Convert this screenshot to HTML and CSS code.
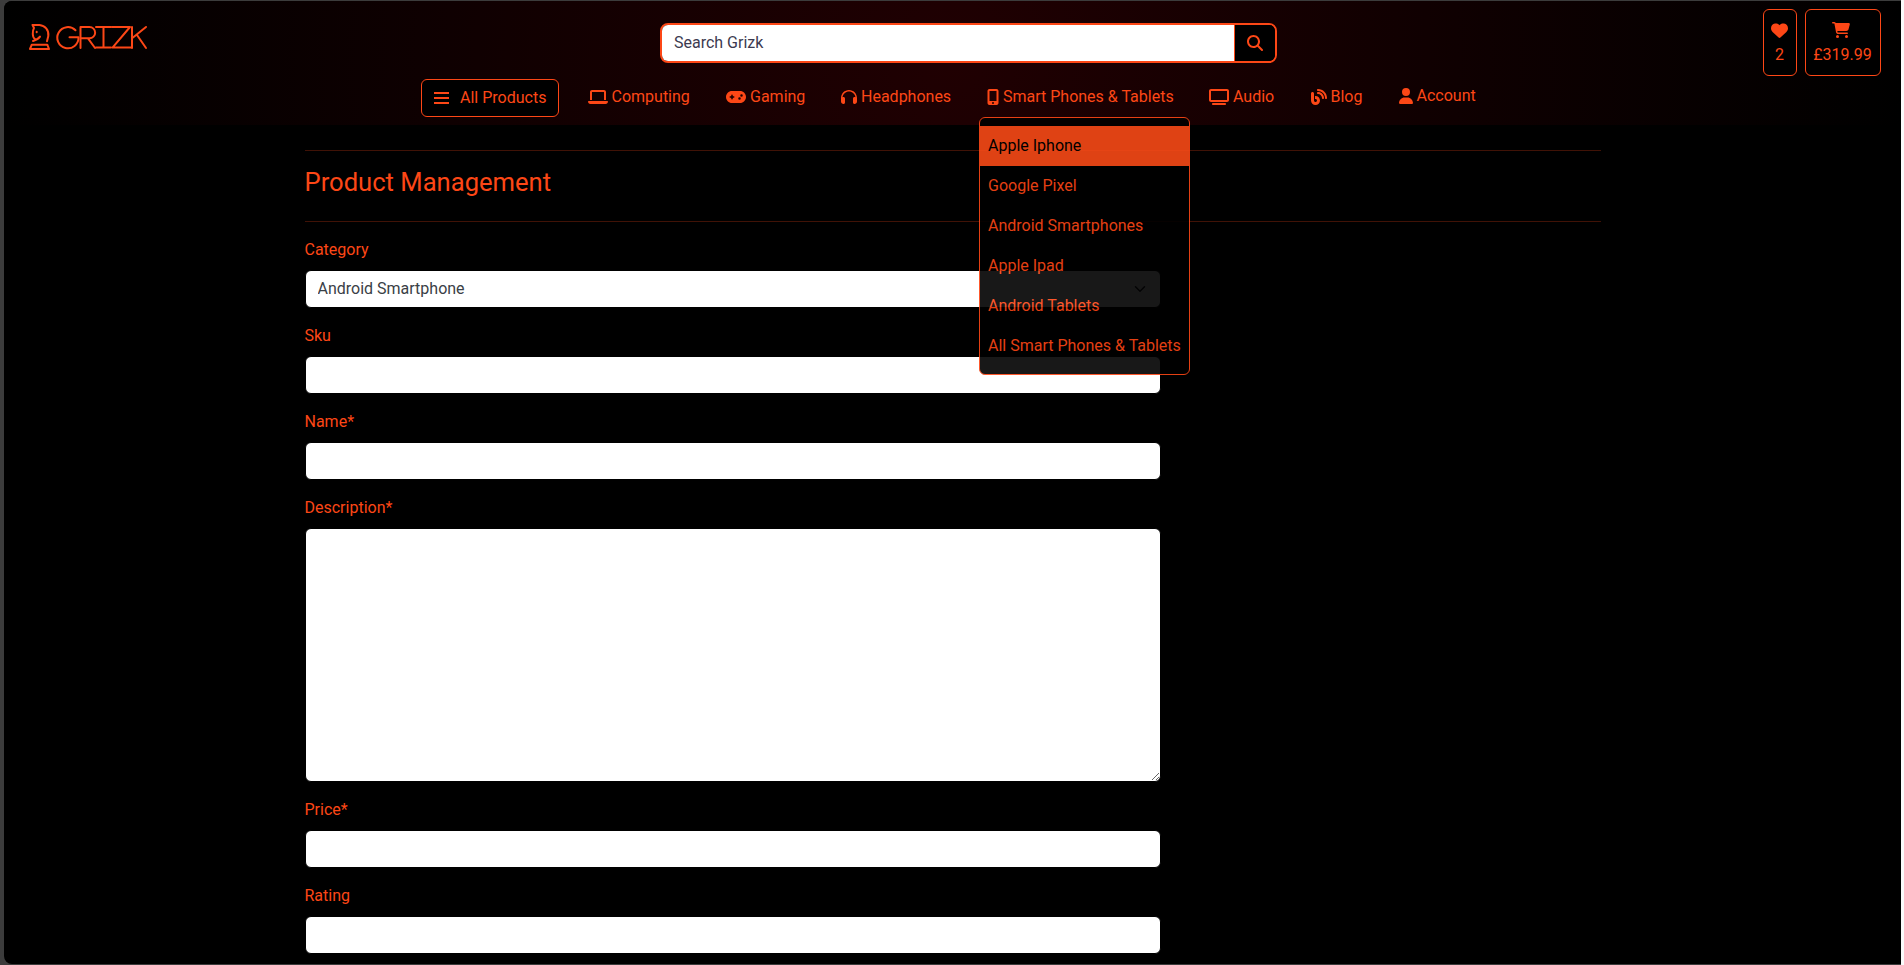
FILE: index.html
```html
<!DOCTYPE html>
<html lang="en">
<head>
<meta charset="utf-8">
<title>Grizk - Product Management</title>
<link rel="stylesheet" href="styles.css">
</head>
<body>
<div class="page">
  <header class="header">
    <div class="topbar">
      <a class="logo" aria-label="Grizk">
        <svg width="120" height="30" viewBox="28 22 120 30" fill="none" stroke="currentColor" stroke-width="2" stroke-linejoin="round" stroke-linecap="round">
          <path d="M33 41C35.500 40.200 38.500 38.800 40 36.600M34.800 38.800C32.300 37.500 32.200 31 34 28L32.500 25H39.500C45 25.500 49 30 48.300 36L47 41.200"/>
          <path d="M36.700 31.700V32.200"/>
          <path d="M31.800 44.700H47.300L49 49H30Z"/>
          <path d="M75.500 30.300A10.600 10.600 0 1 0 78.500 37.300H69.500"/>
          <path d="M80.500 48V27H89.500A5.600 5.600 0 0 1 89.500 38.300H80.500M88 38.300L95 48"/>
          <path d="M96 27H111M96 47.600H111M103.500 27V47.600"/>
          <path d="M112 27H130L112.500 47.600H131"/>
          <path d="M132 27V48M146 27L133 37.500M137 35L146 48"/>
        </svg>
      </a>
      <form class="search">
        <input class="search-input" type="text" placeholder="Search Grizk">
        <button class="search-button" type="button" aria-label="Search"><svg class="icon" width="16" height="16" viewBox="0 0 512 512"><path d="M416 208c0 45.900-14.900 88.300-40 122.700L502.600 457.400c12.500 12.500 12.500 32.800 0 45.300s-32.800 12.500-45.300 0L330.700 376c-34.400 25.200-76.800 40-122.700 40C93.100 416 0 322.900 0 208S93.100 0 208 0S416 93.100 416 208zM208 352a144 144 0 1 0 0-288 144 144 0 1 0 0 288z"/></svg></button>
      </form>
      <div class="baskets">
        <a class="basket wishlist"><svg class="icon" width="17" height="17" viewBox="0 0 512 512"><path d="M47.600 300.400L228.300 469.100c7.500 7 17.400 10.900 27.700 10.900s20.200-3.900 27.700-10.900L464.400 300.400c30.400-28.300 47.600-68 47.600-109.500v-5.800c0-69.900-50.500-129.500-119.400-141C347 36.500 300.600 51.400 268 84L256 96 244 84c-32.600-32.600-79-47.500-124.600-39.900C50.500 55.600 0 115.200 0 185.100v5.800c0 41.500 17.200 81.200 47.600 109.500z"/></svg><span>2</span></a>
        <a class="basket cart"><svg class="icon" width="18" height="16" viewBox="0 0 576 512"><path d="M0 24C0 10.700 10.700 0 24 0H69.500c22 0 41.500 12.800 50.600 32h411c26.300 0 45.500 25 38.600 50.400l-41 152.300c-8.500 31.400-37 53.300-69.500 53.300H170.700l5.400 28.500c2.200 11.300 12.100 19.500 23.600 19.500H488c13.300 0 24 10.700 24 24s-10.700 24-24 24H199.700c-34.600 0-64.300-24.600-70.700-58.500L77.400 54.500c-.7-3.800-4-6.500-7.900-6.500H24C10.700 48 0 37.300 0 24zM128 464a48 48 0 1 1 96 0 48 48 0 1 1-96 0zm336-48a48 48 0 1 1 0 96 48 48 0 1 1 0-96z"/></svg><span>£319.99</span></a>
      </div>
    </div>
    <nav class="nav">
      <button class="all-products" type="button"><svg class="icon" width="15" height="14" viewBox="0 0 15 14"><path d="M0 1h15v2H0zM0 6h15v2H0zM0 11h15v2H0z"/></svg>All Products</button>
      <a class="nav-link computing"><svg class="icon" width="20" height="16" viewBox="0 0 640 512"><path d="M128 32C92.700 32 64 60.700 64 96V352h64V96H512V352h64V96c0-35.300-28.700-64-64-64H128zM19.200 384C8.600 384 0 392.600 0 403.200C0 445.600 34.400 480 76.800 480H563.200c42.400 0 76.800-34.400 76.800-76.800c0-10.600-8.600-19.200-19.200-19.200H19.200z"/></svg>Computing</a>
      <a class="nav-link gaming"><svg class="icon" width="20" height="16" viewBox="0 0 640 512"><path d="M192 64C86 64 0 150 0 256S86 448 192 448H448c106 0 192-86 192-192s-86-192-192-192H192zM496 168a40 40 0 1 1 0 80 40 40 0 1 1 0-80zM392 304a40 40 0 1 1 80 0 40 40 0 1 1-80 0zM168 200c0-13.300 10.700-24 24-24s24 10.700 24 24v32h32c13.300 0 24 10.700 24 24s-10.700 24-24 24H216v32c0 13.300-10.700 24-24 24s-24-10.700-24-24V280H136c-13.300 0-24-10.700-24-24s10.700-24 24-24h32V200z"/></svg>Gaming</a>
      <a class="nav-link headphones"><svg class="icon" width="16" height="16" viewBox="0 0 512 512"><path d="M256 80C149.900 80 62.400 159.400 49.600 262c9.400-3.800 19.600-6 30.400-6c26.500 0 48 21.500 48 48V432c0 26.500-21.500 48-48 48c-44.200 0-80-35.800-80-80V288C0 146.600 114.600 32 256 32s256 114.600 256 256V400c0 44.200-35.800 80-80 80c-26.500 0-48-21.500-48-48V304c0-26.500 21.500-48 48-48c10.800 0 21 2.100 30.400 6C449.600 159.400 362.100 80 256 80z"/></svg>Headphones</a>
      <div class="nav-item">
        <a class="nav-link"><svg class="icon" width="12" height="16" viewBox="0 0 384 512"><path d="M16 64C16 28.700 44.700 0 80 0H304c35.300 0 64 28.700 64 64V448c0 35.300-28.700 64-64 64H80c-35.300 0-64-28.700-64-64V64zM224 448a32 32 0 1 0-64 0 32 32 0 1 0 64 0zM304 64H80V384H304V64z"/></svg>Smart Phones &amp; Tablets</a>
        <div class="menu">
          <a class="menu-item active">Apple Iphone</a>
          <a class="menu-item">Google Pixel</a>
          <a class="menu-item">Android Smartphones</a>
          <a class="menu-item">Apple Ipad</a>
          <a class="menu-item">Android Tablets</a>
          <a class="menu-item">All Smart Phones &amp; Tablets</a>
        </div>
      </div>
      <a class="nav-link audio"><svg class="icon" width="20" height="16" viewBox="0 0 640 512"><path d="M64 64V352H576V64H64zM0 64C0 28.700 28.700 0 64 0H576c35.300 0 64 28.700 64 64V352c0 35.300-28.700 64-64 64H64c-35.300 0-64-28.700-64-64V64zM128 448H512c17.700 0 32 14.300 32 32s-14.300 32-32 32H128c-17.700 0-32-14.300-32-32s14.300-32 32-32z"/></svg>Audio</a>
      <a class="nav-link blog"><svg class="icon" width="16" height="16" viewBox="0 0 512 512"><path d="M192 32c0 17.700 14.300 32 32 32c123.700 0 224 100.300 224 224c0 17.700 14.300 32 32 32s32-14.300 32-32C512 128.900 383.100 0 224 0c-17.700 0-32 14.300-32 32zm0 96c0 17.700 14.300 32 32 32c70.700 0 128 57.300 128 128c0 17.700 14.300 32 32 32s32-14.300 32-32c0-106-86-192-192-192c-17.700 0-32 14.300-32 32zM96 144c0-26.500-21.500-48-48-48S0 117.500 0 144V368c0 79.500 64.500 144 144 144s144-64.500 144-144s-64.500-144-144-144H128v96h16c26.500 0 48 21.500 48 48s-21.500 48-48 48s-48-21.500-48-48V144z"/></svg>Blog</a>
      <a class="nav-link account"><svg class="icon" width="14" height="16" viewBox="0 0 448 512"><path d="M224 256A128 128 0 1 0 224 0a128 128 0 1 0 0 256zm-45.700 48C79.800 304 0 383.800 0 482.300C0 498.700 13.300 512 29.700 512H418.300c16.400 0 29.700-13.300 29.700-29.700C448 383.800 368.200 304 269.700 304H178.300z"/></svg>Account</a>
    </nav>
  </header>
  <main class="content">
    <h2 class="title">Product Management</h2>
    <form class="form">
      <label class="field">Category
        <select class="control select"><option>Android Smartphone</option></select>
      </label>
      <label class="field">Sku<input class="control" type="text"></label>
      <label class="field">Name*<input class="control" type="text"></label>
      <label class="field">Description*<textarea class="control textarea"></textarea></label>
      <label class="field">Price*<input class="control" type="text"></label>
      <label class="field">Rating<input class="control" type="text"></label>
    </form>
  </main>
</div>
</body>
</html>
```
FILE: styles.css
```css
* { box-sizing: border-box; }

body {
  margin: 0;
  height: 965px;
  overflow: hidden;
  padding: 1px 3px 1px 4px;
  background: linear-gradient(90deg, #3c3c3c 0 1901px, #fafafa 1901px);
  font: 16px/24px Roboto, sans-serif;
  color: #fd4716;
}

.page {
  height: 963px;
  background: #000;
  border-radius: 8px 0 0 8px;
}

.header {
  height: 124px;
  border-radius: 8px 0 0 0;
  background: radial-gradient(circle, #200002 0%, #000 100%);
}

.icon { display: block; fill: currentColor; flex: none; }

.topbar {
  display: grid;
  grid-template-columns: 656px 617px 1fr;
  height: 78px;
}

.logo { padding: 21px 0 0 24px; }

.search {
  display: flex;
  height: 40px;
  margin-top: 22px;
  border: 2px solid #fd4716;
  border-radius: 8px;
  background: #000;
  overflow: hidden;
}

.search-input {
  flex: 1;
  min-width: 0;
  border: 0;
  padding: 0 12px;
  font: inherit;
  background: #fff;
}

.search-input::placeholder { color: #3c3a50; opacity: 1; }

.search-button {
  width: 41px;
  padding: 0 0 1px 12px;
  border: 0;
  border-left: 1px solid #fd4716;
  background: #000;
  color: #fd4716;
}

.baskets {
  display: flex;
  justify-content: flex-end;
  gap: 8px;
  padding: 8px 20px 0 0;
}

.basket {
  display: flex;
  flex-direction: column;
  align-items: center;
  width: 76px;
  height: 67px;
  padding-top: 12px;
  border: 1px solid #fd4716;
  border-radius: 6px;
  background: #000;
}

.wishlist { width: 34px; padding-right: 1px; }
.cart { padding-right: 1px; }

.basket .icon { margin-bottom: auto; }
.cart .icon { margin-right: 3px; }
.basket span { margin-bottom: 8px; }

.nav {
  display: flex;
  padding-left: 417px;
}

.all-products {
  display: flex;
  align-items: center;
  gap: 11px;
  width: 138px;
  height: 38px;
  padding: 0 0 0 12px;
  border: 1px solid #fd4716;
  border-radius: 6px;
  background: #000;
  color: #fd4716;
  font: inherit;
}

.nav-item { position: relative; width: 222px; }

.nav-link {
  display: flex;
  align-items: center;
  gap: 4px;
  height: 24px;
  margin-top: 6px;
  white-space: nowrap;
}

.computing { width: 138.500px; margin-left: 28.500px; }
.gaming { width: 115px; }
.headphones { width: 146px; }
.audio { width: 101.500px; }
.blog { width: 88px; }
.account { margin-top: 5px; }

.menu {
  position: absolute;
  z-index: 2;
  top: 38px;
  left: -8px;
  width: 211px;
  padding: 8px 0;
  border: 1px solid #fd4716;
  border-radius: 6px;
  background: #000;
  opacity: .9;
}

.menu-item {
  display: block;
  height: 40px;
  padding: 8px;
  white-space: nowrap;
}

.menu-item.active { background: #f84a17; color: #000; }

.content { width: 1296px; margin: 25px 0 0 300.500px; }

.title {
  height: 72px;
  margin: 0;
  padding-top: 14px;
  border: solid #401206;
  border-width: 1px 0;
  font-size: 25.600px;
  font-weight: 400;
  line-height: 34px;
}

.form { width: 856px; padding-top: 16px; }

.field { display: block; margin-bottom: 16px; }

.control {
  display: block;
  width: 100%;
  height: 38px;
  margin-top: 8px;
  padding: 0 12px;
  border: 1px solid #000;
  border-radius: 6px;
  background: #fff;
  color: #3a4046;
  font: inherit;
}

.select {
  appearance: none;
  background: #fff url("data:image/svg+xml,%3Csvg xmlns='http://www.w3.org/2000/svg' viewBox='0 0 16 16'%3E%3Cpath fill='none' stroke='%23212529' stroke-linecap='round' stroke-linejoin='round' stroke-width='2' d='M2 5l6 6 6-6'/%3E%3C/svg%3E") no-repeat right 12px center / 16px 12px;
}

.textarea { height: 254px; resize: vertical; }
```
